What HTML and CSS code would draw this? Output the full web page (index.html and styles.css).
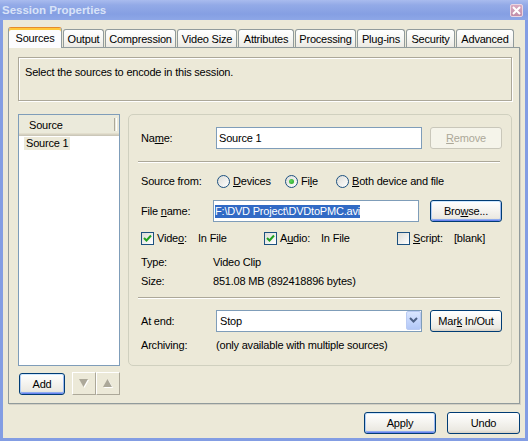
FILE: index.html
```html
<!DOCTYPE html>
<html lang="en">
<head>
    <meta charset="UTF-8">
    <title>Session Properties</title>
    <link rel="stylesheet" href="styles.css">
</head>
<body>
    <div class="window">
        <div class="titlebar">
            <span class="title">Session Properties</span>
            <span class="close-btn">
                <svg width="9" height="9" viewBox="0 0 9 9"><path d="M1 1 L8 8 M8 1 L1 8" stroke="#fff" stroke-width="2"/></svg>
            </span>
        </div>

        <div class="frame">
            <div class="tabs">
                <div class="tab active">Sources</div>
                <div class="tab">Output</div>
                <div class="tab">Compression</div>
                <div class="tab">Video Size</div>
                <div class="tab">Attributes</div>
                <div class="tab">Processing</div>
                <div class="tab">Plug-ins</div>
                <div class="tab">Security</div>
                <div class="tab">Advanced</div>
            </div>

            <div class="tab-pane">
                <div class="hint-box">Select the sources to encode in this session.</div>

                <div class="sources-area">
                    <div class="source-list-col">
                        <div class="listview">
                            <div class="list-header"><span class="col-head">Source</span></div>
                            <div class="list-item selected">Source 1</div>
                        </div>
                        <div class="list-buttons">
                            <button class="btn default add-btn">Add</button>
                            <button class="arrow-btn">
                                <svg width="11" height="10" viewBox="0 0 11 10">
                                    <polygon points="1,1 10,1 5.5,9" fill="#fff"/>
                                    <polygon points="0,0 9,0 4.5,8" fill="#aca899"/>
                                </svg>
                            </button>
                            <button class="arrow-btn">
                                <svg width="11" height="10" viewBox="0 0 11 10">
                                    <polygon points="5.5,1 10,9 1,9" fill="#fff"/>
                                    <polygon points="4.5,0 9,8 0,8" fill="#aca899"/>
                                </svg>
                            </button>
                        </div>
                    </div>

                    <div class="source-group">
                        <div class="field-row">
                            <span class="field-label">Na<u>m</u>e:</span>
                            <div class="field">Source 1</div>
                            <button class="btn disabled"><u>R</u>emove</button>
                        </div>

                        <div class="sep"></div>

                        <div class="field-row radio-row">
                            <span class="field-label">Source from:</span>
                            <div class="radio-group">
                                <label class="radio-item"><span class="radio"></span><span><u>D</u>evices</span></label>
                                <label class="radio-item"><span class="radio checked"></span><span>Fi<u>l</u>e</span></label>
                                <label class="radio-item"><span class="radio"></span><span><u>B</u>oth device and file</span></label>
                            </div>
                        </div>

                        <div class="field-row file-row">
                            <span class="field-label">File <u>n</u>ame:</span>
                            <div class="field file-field"><span class="sel">F:\DVD Project\DVDtoPMC.avi</span></div>
                            <button class="btn default">Bro<u>w</u>se...</button>
                        </div>

                        <div class="check-row">
                            <div class="check-item">
                                <span class="checkbox checked">
                                    <svg width="11" height="11" viewBox="0 0 11 11"><path d="M2 5 L4.5 7.5 L9 2.5" stroke="#21a121" stroke-width="2" fill="none"/></svg>
                                </span>
                                <span class="check-label">Vide<u>o</u>:</span>
                                <span>In File</span>
                            </div>
                            <div class="check-item">
                                <span class="checkbox checked">
                                    <svg width="11" height="11" viewBox="0 0 11 11"><path d="M2 5 L4.5 7.5 L9 2.5" stroke="#21a121" stroke-width="2" fill="none"/></svg>
                                </span>
                                <span class="check-label">A<u>u</u>dio:</span>
                                <span>In File</span>
                            </div>
                            <div class="check-item">
                                <span class="checkbox"></span>
                                <span class="check-label"><u>S</u>cript:</span>
                                <span>[blank]</span>
                            </div>
                        </div>

                        <div class="info-row">
                            <span class="info-label">Type:</span>
                            <span>Video Clip</span>
                        </div>
                        <div class="info-row">
                            <span class="info-label">Size:</span>
                            <span>851.08 MB (892418896 bytes)</span>
                        </div>

                        <div class="sep lower"></div>

                        <div class="field-row end-row">
                            <span class="field-label">At end:</span>
                            <div class="field select">
                                <span>Stop</span>
                                <span class="drop-btn">
                                    <svg width="9" height="6" viewBox="0 0 9 6"><path d="M1 1 L4.5 4.5 L8 1" stroke="#4d6185" stroke-width="2" fill="none"/></svg>
                                </span>
                            </div>
                            <button class="btn">Mar<u>k</u> In/Out</button>
                        </div>

                        <div class="archive-row">
                            <span class="field-label">Archiving:</span>
                            <span>(only available with multiple sources)</span>
                        </div>
                    </div>
                </div>
            </div>

            <div class="dialog-buttons">
                <button class="btn default">Apply</button>
                <button class="btn undo-btn">Undo</button>
            </div>
        </div>
    </div>
</body>
</html>
```

FILE: styles.css
```css
body {
    margin: 0;
    font-family: "Liberation Sans", Arial, sans-serif;
    font-size: 11px;
    letter-spacing: -0.2px;
    color: #000;
    background: #ece9d8;
}

.window {
    width: 528px;
    height: 441px;
    display: flex;
    flex-direction: column;
    overflow: hidden;
}

/* title bar (inactive XP tool window) */
.titlebar {
    height: 20px;
    flex: none;
    display: flex;
    align-items: center;
    justify-content: space-between;
    padding: 0 5px 0 2px;
    background: linear-gradient(#a9bbee, #93aae7 25%, #859fe3 70%, #8ea7e7);
}

.title {
    color: #d9e3f8;
    font-weight: bold;
    font-size: 11.5px;
    letter-spacing: 0;
}

.close-btn {
    width: 13px;
    height: 13px;
    box-sizing: border-box;
    border: 1px solid #ead6e2;
    border-radius: 2px;
    background: linear-gradient(#d8a9c0, #c18ea9);
    display: flex;
    align-items: center;
    justify-content: center;
}

.frame {
    flex: 1;
    display: flex;
    flex-direction: column;
    border: 3px solid #839de3;
    border-top: 0;
    padding: 7px 5px 4px 5px;
    background: #ece9d8;
}

/* tabs */
.tabs {
    display: grid;
    grid-template-columns: 55px 42px 72px 61px 57px 62px 49px 50px 59px;
    align-items: end;
    height: 21px;
    margin-bottom: -1px;
    position: relative;
    z-index: 1;
}

.tab {
    height: 18px;
    margin: 0 1px 1px 0;
    box-sizing: border-box;
    border: 1px solid #919b9c;
    border-bottom: none;
    border-radius: 3px 3px 0 0;
    background: linear-gradient(#fff, #f7f7f4 50%, #eceae3);
    text-align: center;
    line-height: 18px;
}

.tab.active {
    height: 21px;
    margin-bottom: 0;
    border-top: 1px solid #e68b2c;
    box-shadow: inset 0 2px 0 #ffc83c;
    background: #fcfcfe;
    line-height: 19px;
    padding-top: 1px;
}

.tab-pane {
    height: 357px;
    box-sizing: border-box;
    border: 1px solid #919b9c;
    box-shadow: 1px 1px 0 #d3d0c4;
    padding: 9px 7px 0 9px;
    background: #ece9d8;
}

.hint-box {
    height: 44px;
    box-sizing: border-box;
    border: 1px solid #aca899;
    box-shadow: inset 1px 1px 0 #fff, 1px 1px 0 #fff;
    padding: 8px 6px;
    line-height: 13px;
}

.sources-area {
    display: flex;
    gap: 8px;
    margin-top: 13px;
}

/* list of sources */
.source-list-col {
    width: 102px;
}

.listview {
    height: 252px;
    box-sizing: border-box;
    border: 1px solid #7f9db9;
    background: #fff;
}

.list-header {
    height: 21px;
    box-sizing: border-box;
    padding-left: 10px;
    line-height: 20px;
    background: #ebeadb;
    box-shadow: inset 0 -1px 0 #cbc7b8, inset 0 -2px 0 #d6d2c2, inset 0 -3px 0 #e2decd;
    position: relative;
}

.list-header::after {
    content: "";
    position: absolute;
    left: 95px;
    top: 3px;
    width: 1px;
    height: 13px;
    border-left: 1px solid #aca899;
    border-right: 1px solid #fff;
}

.list-item {
    display: inline-block;
    margin: 1px 0 0 5px;
    padding: 0 2px;
    line-height: 13px;
}

.list-item.selected {
    background: #ece9d8;
}

.list-buttons {
    display: flex;
    align-items: flex-start;
    margin-top: 6px;
}

.arrow-btn {
    width: 24px;
    height: 23px;
    padding: 0;
    box-sizing: border-box;
    border: 1px solid;
    border-color: #fff #aca899 #aca899 #fff;
    background: #ece9d8;
    display: flex;
    align-items: center;
    justify-content: center;
}

.arrow-btn svg {
    margin-left: 1px;
}

/* source details group */
.source-group {
    width: 384px;
    height: 252px;
    box-sizing: border-box;
    border: 1px solid #d0d0bf;
    border-radius: 5px;
    padding: 11px 9px 0 12px;
}

.field-row {
    display: flex;
    align-items: center;
    height: 23px;
}

.field-label {
    width: 75px;
    flex: none;
}

.field {
    width: 206px;
    height: 22px;
    box-sizing: border-box;
    border: 1px solid #7f9db9;
    background: #fff;
    padding: 0 2px;
    line-height: 20px;
    margin-right: 8px;
}

.file-field {
    margin-left: -3px;
    margin-right: 11px;
    padding: 0 1px;
}

.sel {
    background: #316ac5;
    color: #fff;
    padding: 0 0 1px;
}

.sep {
    margin: 12px 2px 0 -3px;
    border-top: 1px solid #aca899;
    border-bottom: 1px solid #fff;
}

.sep.lower {
    margin-top: 7px;
}

.radio-row {
    height: 18px;
    margin-top: 9px;
}

.radio-group {
    display: grid;
    grid-template-columns: 68px 51px auto;
}

.radio-item {
    display: flex;
    align-items: center;
    gap: 3px;
}

.radio {
    width: 13px;
    height: 13px;
    margin-left: 1px;
    box-sizing: border-box;
    border: 1px solid #1c5180;
    border-radius: 50%;
    background: linear-gradient(135deg, #dcdcd7, #fff);
    position: relative;
}

.radio.checked::after {
    content: "";
    position: absolute;
    left: 3px;
    top: 3px;
    width: 5px;
    height: 5px;
    border-radius: 50%;
    background: radial-gradient(circle at 40% 40%, #5fd55f, #21a121);
}

.file-row {
    margin-top: 9px;
}

.check-row {
    display: grid;
    grid-template-columns: 123px 133px auto;
    height: 16px;
    align-items: center;
    margin-top: 8px;
}

.check-item {
    display: flex;
    align-items: center;
}

.checkbox {
    width: 13px;
    height: 13px;
    box-sizing: border-box;
    border: 1px solid #1c5180;
    background: linear-gradient(135deg, #dcdcd7, #fff);
    margin-right: 3px;
    display: flex;
}

.check-label {
    width: 41px;
}

.info-row {
    display: flex;
    align-items: center;
    height: 19px;
}

.check-row + .info-row {
    margin-top: 6px;
}

.info-label {
    width: 72px;
}

.end-row {
    height: 23px;
    margin-top: 10px;
}

.select {
    display: flex;
    justify-content: space-between;
    padding: 0 0 0 3px;
}

.drop-btn {
    width: 15px;
    box-sizing: border-box;
    border: 1px solid #bacbf3;
    border-radius: 2px;
    background: linear-gradient(#dae6fe, #c1d3fb 60%, #b3c8f7);
    display: flex;
    align-items: center;
    justify-content: center;
    margin-bottom: 1px;
}

.archive-row {
    display: flex;
    align-items: center;
    height: 16px;
    margin-top: 5px;
}

/* XP style buttons */
.btn {
    width: 72px;
    height: 22px;
    padding: 0;
    box-sizing: border-box;
    border: 1px solid #003c74;
    border-radius: 3px;
    background: linear-gradient(#fff, #f5f4f0 45%, #ebe9e2 85%, #d6d0c5);
    font: inherit;
    letter-spacing: inherit;
    color: #000;
}

.btn.default {
    box-shadow: inset 0 1px 0 #cee7ff, inset 1px 0 0 #b0cdf5, inset -1px 0 0 #9cb9f0, inset 0 -1px 0 #6982ee, inset 0 -2px 0 #8eacf0;
}

.btn.disabled {
    border-color: #c9c7ba;
    background: #f5f4ea;
    color: #aca899;
}

.btn.add-btn {
    width: 46px;
    margin: 1px 7px 0 1px;
}

.btn.undo-btn {
    width: 73px;
}

.dialog-buttons {
    display: flex;
    justify-content: flex-end;
    gap: 11px;
    margin-top: 8px;
}
```
